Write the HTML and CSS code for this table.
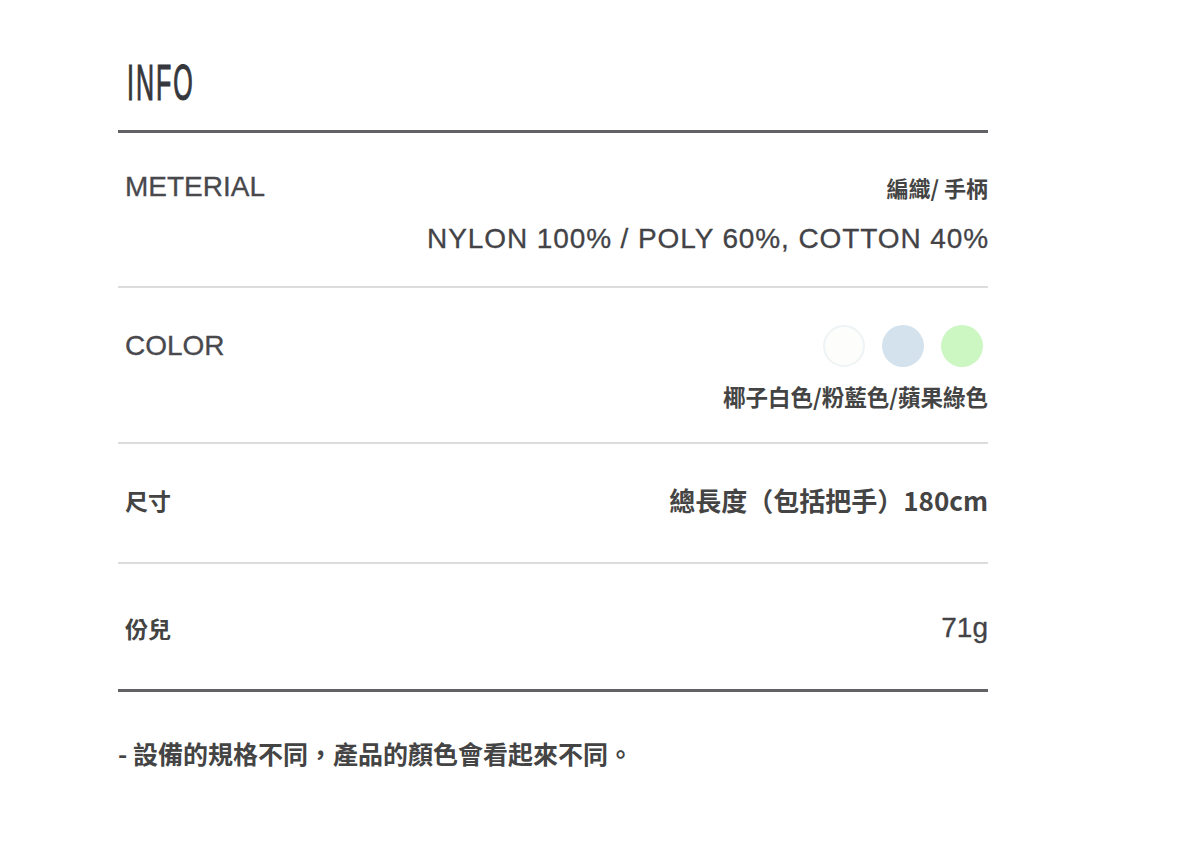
FILE: index.html
```html
<!DOCTYPE html>
<html lang="zh-Hant">
<head>
<meta charset="utf-8">
<title>INFO</title>
<link rel="stylesheet" href="styles.css">
</head>
<body>
<div class="info">
  <div class="heading"><h1 class="title">INFO</h1></div>
  <div class="table">
    <div class="row row-material">
      <div class="label latin">METERIAL</div>
      <div class="value">
        <div class="cjk sm">編織/ 手柄</div>
        <div class="latin big nylon">NYLON 100% / POLY 60%, COTTON 40%</div>
      </div>
    </div>
    <div class="row row-color">
      <div class="label latin">COLOR</div>
      <div class="value">
        <div class="swatches">
          <span class="swatch white"></span>
          <span class="swatch blue"></span>
          <span class="swatch green"></span>
        </div>
        <div class="cjk md colors">椰子白色/粉藍色/蘋果綠色</div>
      </div>
    </div>
    <div class="row row-size">
      <div class="label cjk sm">尺寸</div>
      <div class="value"><div class="cjk lg">總長度（包括把手）180cm</div></div>
    </div>
    <div class="row row-weight">
      <div class="label cjk sm">份兒</div>
      <div class="value"><div class="latin big">71g</div></div>
    </div>
  </div>
  <p class="note">- 設備的規格不同，產品的顏色會看起來不同。</p>
</div>
</body>
</html>
```
FILE: styles.css
```css
html, body {
  margin: 0;
  padding: 0;
  background: #ffffff;
}
body {
  font-family: "Liberation Sans", "Noto Sans CJK TC", sans-serif;
  color: #444;
}
.info {
  width: 870px;
  margin-left: 118px;
  padding-top: 56px;
}
.heading {
  height: 74px;
}
.title {
  margin: 0;
  display: inline-block;
  font-family: "Liberation Sans", sans-serif;
  font-weight: normal;
  font-size: 50px;
  line-height: 54px;
  letter-spacing: 4px;
  color: #36373c;
  -webkit-text-stroke: 1.2px #36373c;
  transform: scaleX(0.5);
  transform-origin: 0 0;
  margin-left: 9px;
}
.table {
  border-top: 3px solid #616166;
}
.row {
  display: flex;
  justify-content: space-between;
  align-items: flex-start;
  border-bottom: 2px solid #dcdcdc;
  box-sizing: border-box;
}
.row-weight {
  border-bottom: 3px solid #616166;
}
.row-material { height: 155px; padding-top: 36px; }
.row-color { height: 156px; padding-top: 40px; }
.row-size { height: 120px; padding-top: 38px; }
.row-weight { height: 128px; padding-top: 46px; }

.label {
  margin-left: 7px;
  line-height: 36px;
}
.latin {
  font-family: "Liberation Sans", sans-serif;
  font-size: 28px;
  color: #434347;
  -webkit-text-stroke: 0.3px #434347;
}
.label.latin { color: #48484d; -webkit-text-stroke: 0.3px #48484d; }
.cjk {
  font-family: "Noto Sans CJK TC", "Noto Sans", sans-serif;
  font-weight: 700;
  color: #444;
}
.sm { font-size: 23px; line-height: 36px; }
.md { font-size: 22.5px; line-height: 36px; }
.lg { font-size: 26px; line-height: 36px; }
.big { line-height: 36px; }
.value {
  display: flex;
  flex-direction: column;
  align-items: flex-end;
}
.value .sm { font-size: 22px; }
.nylon {
  margin-top: 16px;
  letter-spacing: 0.9px;
  margin-right: -1px;
}
.swatches {
  display: flex;
  gap: 17px;
  margin-top: -3px;
  margin-right: 5px;
}
.swatch {
  width: 42px;
  height: 42px;
  border-radius: 50%;
  box-sizing: border-box;
}
.swatch.white { background: #fdfefc; border: 2px solid #eef3f5; }
.swatch.blue { background: #d3e2ec; }
.swatch.green { background: #ccf6c2; }
.colors {
  margin-top: 11px;
}
.note {
  margin: 43px 0 0;
  font-family: "Noto Sans CJK TC", sans-serif;
  font-weight: 700;
  font-size: 25px;
  line-height: 36px;
  color: #444;
}
```
